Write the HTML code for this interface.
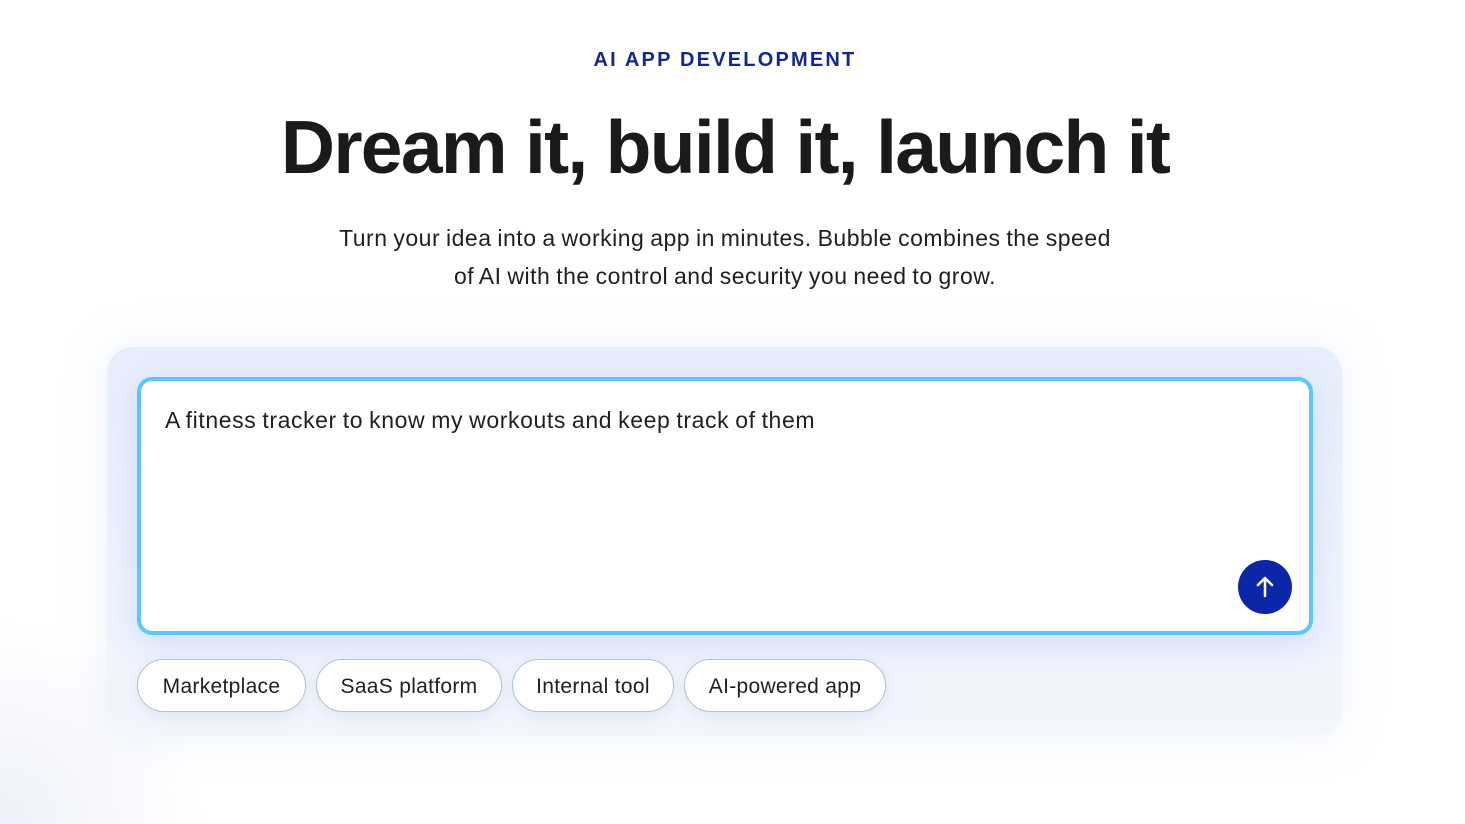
<!DOCTYPE html>
<html><head><meta charset="utf-8"><style>
*{margin:0;padding:0;box-sizing:border-box}
html,body{width:1465px;height:824px;overflow:hidden}
body{background:#fff;font-family:"Liberation Sans",sans-serif;position:relative;color:#1a1a1a}
.bg{position:absolute;left:0;top:600px;width:260px;height:224px;background:radial-gradient(circle at 0 100%,#eef1fb,rgba(255,255,255,0) 60%);}
.lbl{position:absolute;top:49px;left:0;width:1450px;text-align:center;font-size:20px;font-weight:bold;color:#12288f;letter-spacing:2.2px}
h1{position:absolute;top:104px;left:0;width:1450px;text-align:center;font-size:75px;font-weight:bold;letter-spacing:-1.7px;color:#1a1a1a}
.sub{position:absolute;top:219px;left:0;width:1450px;text-align:center;font-size:23px;line-height:38px;color:#1f1f1f;letter-spacing:0.5px;word-spacing:-1px}
.panel{position:absolute;left:107px;top:347px;width:1235px;height:389px;border-radius:26px;background:linear-gradient(180deg,#e7eefb,#f2f5fd);box-shadow:0 0 40px rgba(200,215,245,.35)}
.ta{position:absolute;left:137px;top:377px;width:1176px;height:258px;border:4.5px solid #5fc6fb;border-radius:15px;background:#fff;box-shadow:0 8px 30px rgba(170,195,240,.45)}
.ta p{position:absolute;left:24px;top:26px;font-size:23px;color:#1f1f1f;letter-spacing:0.6px;word-spacing:-1px}
.btn{position:absolute;left:1238px;top:560px;width:54px;height:54px;border-radius:50%;background:#0b27a8}
.chip{position:absolute;top:659px;height:53px;border:1px solid #b3c0da;border-radius:27px;background:#fff;font-size:21px;line-height:53px;text-align:center;color:#1f1f1f;letter-spacing:0.3px;box-shadow:0 4px 12px rgba(180,195,230,.3)}
</style></head><body>
<div class="bg"></div>
<div class="lbl">AI APP DEVELOPMENT</div>
<h1>Dream it, build it, launch it</h1>
<div class="sub">Turn your idea into a working app in minutes. Bubble combines the speed<br>of AI with the control and security you need to grow.</div>
<div class="panel"></div>
<div class="ta"><p>A fitness tracker to know my workouts and keep track of them</p></div>
<div class="btn"><svg width="54" height="54" viewBox="0 0 54 54"><path d="M27 36V18M20 25l7-7 7 7" stroke="#fff" stroke-width="2.5" fill="none" stroke-linecap="round" stroke-linejoin="round"/></svg></div>
<div class="chip" style="left:137px;width:169px">Marketplace</div>
<div class="chip" style="left:316px;width:186px">SaaS platform</div>
<div class="chip" style="left:512px;width:162px">Internal tool</div>
<div class="chip" style="left:684px;width:202px">AI-powered app</div>
</body></html>
